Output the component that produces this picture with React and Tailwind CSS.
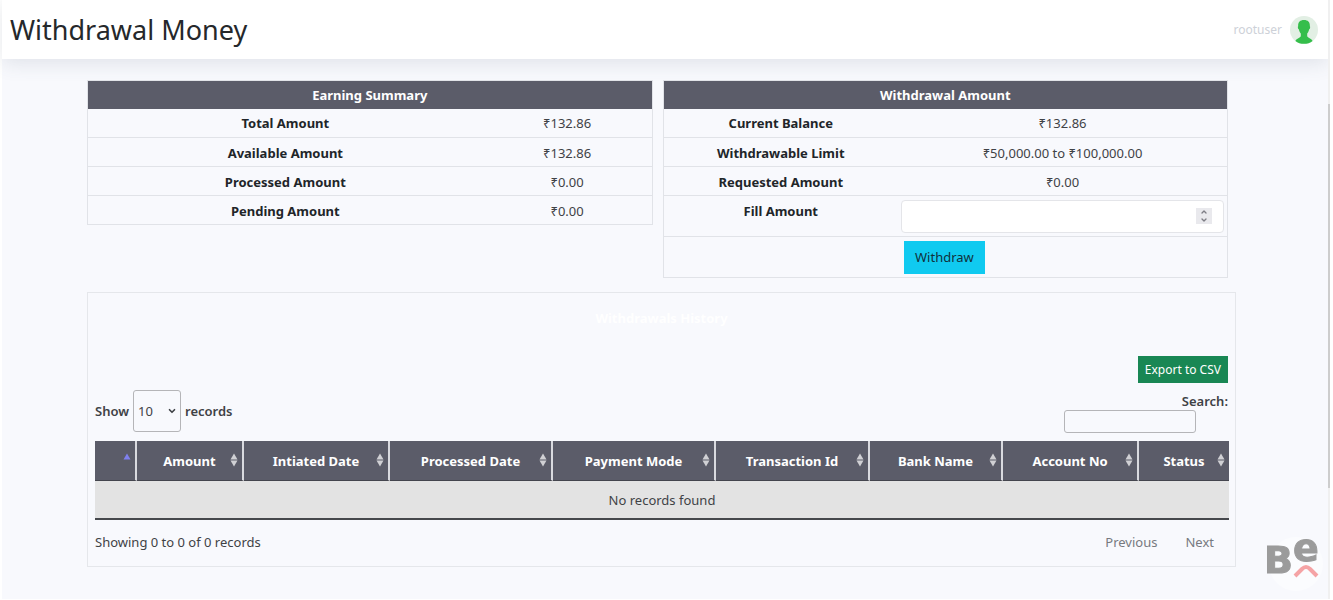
import React from 'react';
import { ChevronDown, ChevronUp } from 'lucide-react';

const summary = [
  ['Total Amount', '₹132.86'],
  ['Available Amount', '₹132.86'],
  ['Processed Amount', '₹0.00'],
  ['Pending Amount', '₹0.00'],
];

const limits = [
  ['Current Balance', '₹132.86'],
  ['Withdrawable Limit', '₹50,000.00 to ₹100,000.00'],
  ['Requested Amount', '₹0.00'],
];

const columns = [
  { name: '', width: 'w-[42px]' },
  { name: 'Amount', width: 'w-[107px]' },
  { name: 'Intiated Date', width: 'w-[146px]' },
  { name: 'Processed Date', width: 'w-[163px]' },
  { name: 'Payment Mode', width: 'w-[163px]' },
  { name: 'Transaction Id', width: 'w-[154px]' },
  { name: 'Bank Name', width: 'w-[133px]' },
  { name: 'Account No', width: 'w-[136px]' },
  { name: 'Status', width: 'w-[90px]' },
];

function Avatar() {
  return (
    <svg viewBox="0 0 28 28" className="w-7 h-7">
      <circle cx="14" cy="14" r="14" fill="#e2efe4" />
      <path
        d="M14 4C9.6 4 7.8 6.6 8.2 10.3C7.6 10.6 7.8 12.6 8.8 13.3C9.2 15.3 10 16.6 10.8 17.5V20.3C10.2 22 6.8 22.3 5.4 24.9C10 28.8 18 28.8 22.6 24.9C21.2 22.3 17.8 22 17.2 20.3V17.5C18 16.6 18.8 15.3 19.2 13.3C20.2 12.6 20.4 10.6 19.8 10.3C20.2 6.6 18.4 4 14 4Z"
        fill="#35be4b"
      />
    </svg>
  );
}

function SortIcon({ first }) {
  return (
    <svg viewBox="0 0 8 14" className="absolute right-1 top-3 w-2 h-3.5">
      <path d="M4 0.5L7.5 6.5H0.5Z" fill={first ? '#7f80ee' : '#d0d0d4'} />
      {!first && <path d="M4 13.5L7.5 7.5H0.5Z" fill="#d0d0d4" />}
    </svg>
  );
}

function BrandMark() {
  return (
    <svg viewBox="0 0 76 76" className="fixed right-0 bottom-2 w-[76px] h-[76px]" aria-label="Be">
      <circle cx="39" cy="48" r="27" fill="#fbfcfe" />
      <g fill="#9b9b9b" stroke="#9b9b9b" fontFamily="DejaVu Sans, sans-serif" fontWeight="700" fontSize="38">
        <text x="7" y="57">B</text>
        <text x="36" y="45">e</text>
      </g>
      <path d="M38 60L45 53Q49 49 53 53L60 60" fill="none" stroke="#f5a3a5" strokeWidth="4" />
    </svg>
  );
}

export default function App() {
  return (
    <div className="flex min-h-screen bg-white pb-0.5 font-['Noto_Sans',sans-serif] text-[13px] leading-5 text-[#3f4246]">
      <div className="flex-1 min-w-0 ml-0.5 bg-[#f8f9fd]">
        <header className="flex items-center justify-between h-[59px] pl-2 pr-[10px] bg-white shadow-[0_4px_20px_rgba(70,85,105,0.14)]">
          <h1 className="text-[27px] leading-8 text-[#25282b]">Withdrawal Money</h1>
          <div className="flex items-center gap-2">
            <span className="text-xs text-[#cdd1d8]">rootuser</span>
            <Avatar />
          </div>
        </header>

        <main className="pl-[85px] pr-[92px] pt-[21px] pb-8">
          <div className="grid grid-cols-2 items-start gap-[10px] pr-2">
            <table className="w-full table-fixed border-collapse border border-[#e1e3e8] text-center">
              <colgroup>
                <col className="w-[70%]" />
                <col />
              </colgroup>
              <thead>
                <tr className="h-7 bg-[#5b5c69] text-white">
                  <th colSpan={2} className="font-bold">Earning Summary</th>
                </tr>
              </thead>
              <tbody>
                {summary.map(([label, value]) => (
                  <tr key={label} className="h-[29px] border-b border-[#e1e3e8]">
                    <th scope="row" className="pt-px font-bold text-[#212529]">{label}</th>
                    <td className="pt-px">{value}</td>
                  </tr>
                ))}
              </tbody>
            </table>

            <table className="w-full table-fixed border-collapse border border-[#e1e3e8] text-center">
              <colgroup>
                <col className="w-[235px]" />
                <col />
              </colgroup>
              <thead>
                <tr className="h-7 bg-[#5b5c69] text-white">
                  <th colSpan={2} className="font-bold">Withdrawal Amount</th>
                </tr>
              </thead>
              <tbody>
                {limits.map(([label, value]) => (
                  <tr key={label} className="h-[29px] border-b border-[#e1e3e8]">
                    <th scope="row" className="pt-px font-bold text-[#212529]">{label}</th>
                    <td className="pt-px">{value}</td>
                  </tr>
                ))}
                <tr className="h-[41px] border-b border-[#e1e3e8]">
                  <th scope="row" className="pt-[5px] align-top font-bold text-[#212529]">
                    <label htmlFor="fill-amount">Fill Amount</label>
                  </th>
                  <td className="px-[3px]">
                    <div className="relative">
                      <input
                        id="fill-amount"
                        type="number"
                        className="block w-full h-[33px] px-3 rounded border border-[#e4e5e9] bg-white [appearance:textfield]"
                      />
                      <span className="absolute right-3 top-2 flex flex-col items-center justify-center w-4 h-4 bg-[#e9e9ed] text-[#7d7d85]">
                        <ChevronUp className="w-2 h-2" strokeWidth={4} />
                        <ChevronDown className="w-2 h-2" strokeWidth={4} />
                      </span>
                    </div>
                  </td>
                </tr>
                <tr className="h-[41px]">
                  <td></td>
                  <td className="px-1.5 text-left">
                    <button className="block h-[33px] px-[11px] bg-[#10caf0] text-[#10313c]">Withdraw</button>
                  </td>
                </tr>
              </tbody>
            </table>
          </div>

          <section className="mt-3.5 px-[7px] pt-[15px] pb-3.5 border border-[#e5e7eb]">
            <h2 className="text-center font-bold text-white">Withdrawals History</h2>

            <div className="flex justify-end mt-7">
              <button className="h-[27px] px-[7px] bg-[#198754] text-xs text-white">Export to CSV</button>
            </div>

            <div className="flex items-end justify-between mt-[7px]">
              <div className="flex items-center gap-1 pb-px font-semibold">
                <label htmlFor="page-size">Show</label>
                <span className="relative">
                  <select
                    id="page-size"
                    className="block w-12 h-[42px] pl-1 appearance-none rounded-[3px] border border-[#b5b5b8] font-normal"
                    defaultValue="10"
                  >
                    <option>10</option>
                    <option>25</option>
                    <option>50</option>
                  </select>
                  <ChevronDown className="absolute right-1 top-4 w-2.5 h-2.5 pointer-events-none" strokeWidth={4} />
                </span>
                <span>records</span>
              </div>
              <div className="flex flex-col items-end font-semibold">
                <label htmlFor="search" className="leading-[18px]">Search:</label>
                <input id="search" type="search" className="w-[132px] h-[23px] mr-8 px-1 rounded-[3px] border border-[#b5b5b8]" />
              </div>
            </div>

            <table className="w-full mt-2 table-fixed border-separate border-spacing-0 border-b-2 border-[#46484c] text-center">
              <thead>
                <tr className="h-10 bg-[#5b5c69] text-white">
                  {columns.map((col, i) => (
                    <th
                      key={col.name}
                      className={`relative ${col.width} border-b border-b-[#44454e] border-r-2 border-r-[#d9dadf] font-bold last:border-r-0`}
                    >
                      {col.name}
                      <SortIcon first={i === 0} />
                    </th>
                  ))}
                </tr>
              </thead>
              <tbody>
                <tr className="h-[37px] bg-[#e3e3e3]">
                  <td colSpan={columns.length}>No records found</td>
                </tr>
              </tbody>
            </table>

            <div className="flex items-center justify-between mt-3">
              <p>Showing 0 to 0 of 0 records</p>
              <nav className="flex gap-7 pr-3.5 text-[#777a80]">
                <a href="#previous">Previous</a>
                <a href="#next">Next</a>
              </nav>
            </div>
          </section>
        </main>
      </div>

      {/* Scroll track */}
      <div className="shrink-0 w-[5px] pt-[104px] border-l-2 border-[#f0f0f0] bg-white">
        <div className="w-0.5 h-96 -ml-0.5 bg-[#cdcdcd]"></div>
      </div>

      <BrandMark />
    </div>
  );
}
